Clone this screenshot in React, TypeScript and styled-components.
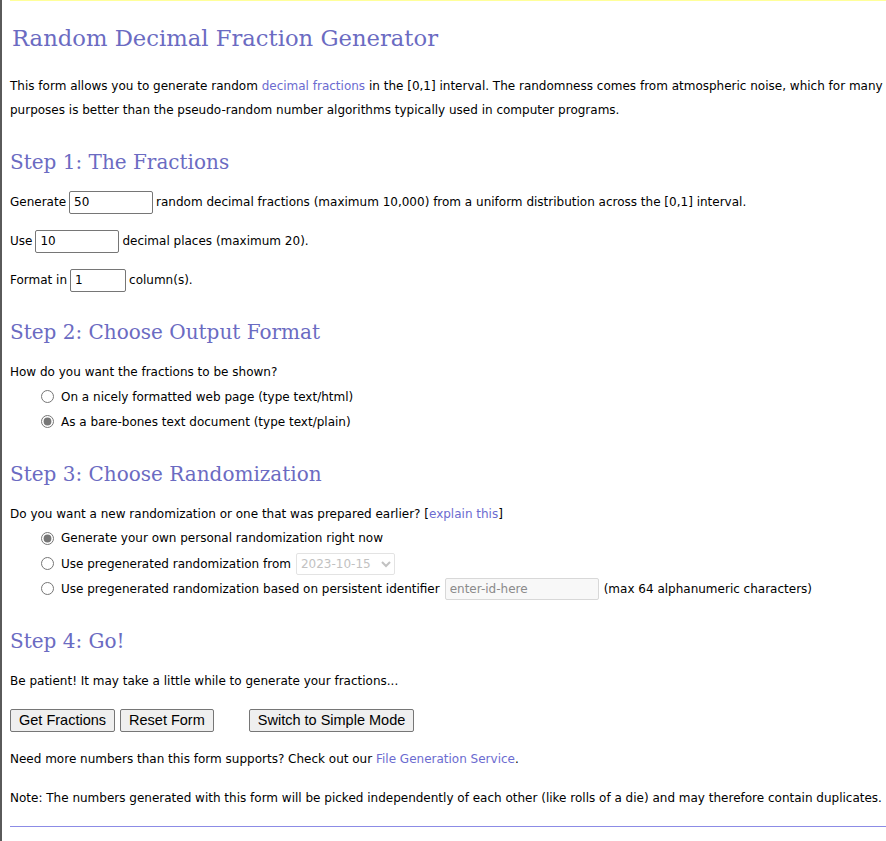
import React from "react";
import styled, { createGlobalStyle } from "styled-components";

const Global = createGlobalStyle`
  html, body { margin: 0; padding: 0; background: #fff; overflow-x: hidden; }
  body { font-family: "DejaVu Sans", Tahoma, sans-serif; font-size: 12px; color: #000; }
`;

const Frame = styled.div`
  border-left: 2px solid #5a5a5a;
  min-height: 841px;
  box-sizing: border-box;
  display: flow-root;
`;

const Content = styled.main`
  margin-left: 8px;
  width: 920px;
  border-top: 1px solid #ffff99;
  padding-top: 21px;
`;

const Title = styled.h1`
  font-family: "DejaVu Serif", Georgia, serif;
  font-weight: normal;
  font-size: 22.7px;
  color: #6b6bc2;
  margin: 0 0 20px 2px;
  line-height: 32px;
`;

const SubTitle = styled.h2<{ $top?: number }>`
  font-family: "DejaVu Serif", Georgia, serif;
  font-weight: normal;
  font-size: 20px;
  color: #6b6bc2;
  margin: ${(p) => p.$top ?? 26}px 0 14px 0;
  line-height: 28px;
`;

const Para = styled.p<{ $gap?: number }>`
  margin: 0 0 ${(p) => p.$gap ?? 15}px 0;
  line-height: 24px;
`;

const Link = styled.a`
  color: #6b6bd0;
  text-decoration: none;
`;

const FieldRow = styled.div`
  display: flex;
  align-items: center;
  gap: 3px;
  height: 24px;
  margin-bottom: 15px;
`;

const NumInput = styled.input<{ $w: number }>`
  width: ${(p) => p.$w}px;
  height: 23px;
  box-sizing: border-box;
  border: 1px solid #767676;
  border-radius: 2px;
  padding: 1px 4px;
  font-family: "DejaVu Sans", sans-serif;
  font-size: 12px;
  color: #000;
  background: #fff;
`;

const RadioList = styled.div`
  display: flex;
  flex-direction: column;
  margin: 0 0 22px 31px;
`;

const RadioRow = styled.label`
  display: flex;
  align-items: center;
  height: 25.3px;
  gap: 5px;
`;

const Radio = styled.input.attrs({ type: "radio" })`
  margin: 0 2px 0 0;
  width: 13px;
  height: 13px;
  accent-color: #767676;
`;

const Select = styled.select`
  height: 22px;
  width: 99px;
  border: 1px solid #d8d8d8;
  border-radius: 2px;
  color: #a8a8a8;
  background: #fff;
  font-family: "DejaVu Sans", sans-serif;
  font-size: 12px;
`;

const IdInput = styled.input`
  width: 154px;
  height: 22px;
  box-sizing: border-box;
  border: 1px solid #d8d8d8;
  border-radius: 2px;
  background: #f8f8f8;
  padding: 1px 4px;
  font-family: "DejaVu Sans", sans-serif;
  font-size: 12px;
  &::placeholder { color: #8a8a8a; }
`;

const ButtonBar = styled.div`
  display: flex;
  align-items: center;
  gap: 5px;
  height: 24px;
  margin: 0 0 15px 0;
`;

const Button = styled.button<{ $push?: number }>`
  height: 23px;
  padding: 0 8px;
  margin-left: ${(p) => p.$push ?? 0}px;
  border: 1px solid #767676;
  border-radius: 2px;
  background: #efefef;
  font-family: "Liberation Sans", Arial, sans-serif;
  font-size: 14.5px;
  color: #000;
`;

const Rule = styled.hr`
  border: 0;
  border-top: 1px solid #8c8ce6;
  margin: 16px 0 0 0;
`;

export default function App() {
  return (
    <>
      <Global />
      <Frame>
        <Content>
          <Title>Random Decimal Fraction Generator</Title>
          <Para>
            This form allows you to generate random <Link href="#">decimal fractions</Link> in the [0,1] interval.
            The randomness comes from atmospheric noise, which for many purposes is better than the pseudo-random
            number algorithms typically used in computer programs.
          </Para>

          <SubTitle>Step 1: The Fractions</SubTitle>
          <FieldRow>
            Generate <NumInput $w={84} defaultValue="50" /> random decimal fractions (maximum 10,000) from a uniform
            distribution across the [0,1] interval.
          </FieldRow>
          <FieldRow>
            Use <NumInput $w={84} defaultValue="10" /> decimal places (maximum 20).
          </FieldRow>
          <FieldRow>
            Format in <NumInput $w={56} defaultValue="1" /> column(s).
          </FieldRow>

          <SubTitle>Step 2: Choose Output Format</SubTitle>
          <Para $gap={0}>How do you want the fractions to be shown?</Para>
          <RadioList>
            <RadioRow>
              <Radio name="format" /> On a nicely formatted web page (type text/html)
            </RadioRow>
            <RadioRow>
              <Radio name="format" defaultChecked /> As a bare-bones text document (type text/plain)
            </RadioRow>
          </RadioList>

          <SubTitle $top={25}>Step 3: Choose Randomization</SubTitle>
          <Para $gap={0}>
            Do you want a new randomization or one that was prepared earlier? [<Link href="#">explain this</Link>]
          </Para>
          <RadioList>
            <RadioRow>
              <Radio name="rnd" defaultChecked /> Generate your own personal randomization right now
            </RadioRow>
            <RadioRow>
              <Radio name="rnd" /> Use pregenerated randomization from
              <Select disabled defaultValue="2023-10-15">
                <option>2023-10-15</option>
              </Select>
            </RadioRow>
            <RadioRow>
              <Radio name="rnd" /> Use pregenerated randomization based on persistent identifier
              <IdInput disabled placeholder="enter-id-here" /> (max 64 alphanumeric characters)
            </RadioRow>
          </RadioList>

          <SubTitle>Step 4: Go!</SubTitle>
          <Para>Be patient! It may take a little while to generate your fractions...</Para>
          <ButtonBar>
            <Button>Get Fractions</Button>
            <Button>Reset Form</Button>
            <Button $push={30}>Switch to Simple Mode</Button>
          </ButtonBar>
          <Para>
            Need more numbers than this form supports? Check out our <Link href="#">File Generation Service</Link>.
          </Para>
          <Para $gap={0}>
            Note: The numbers generated with this form will be picked independently of each other (like rolls of a
            die) and may therefore contain duplicates.
          </Para>
          <Rule />
        </Content>
      </Frame>
    </>
  );
}
